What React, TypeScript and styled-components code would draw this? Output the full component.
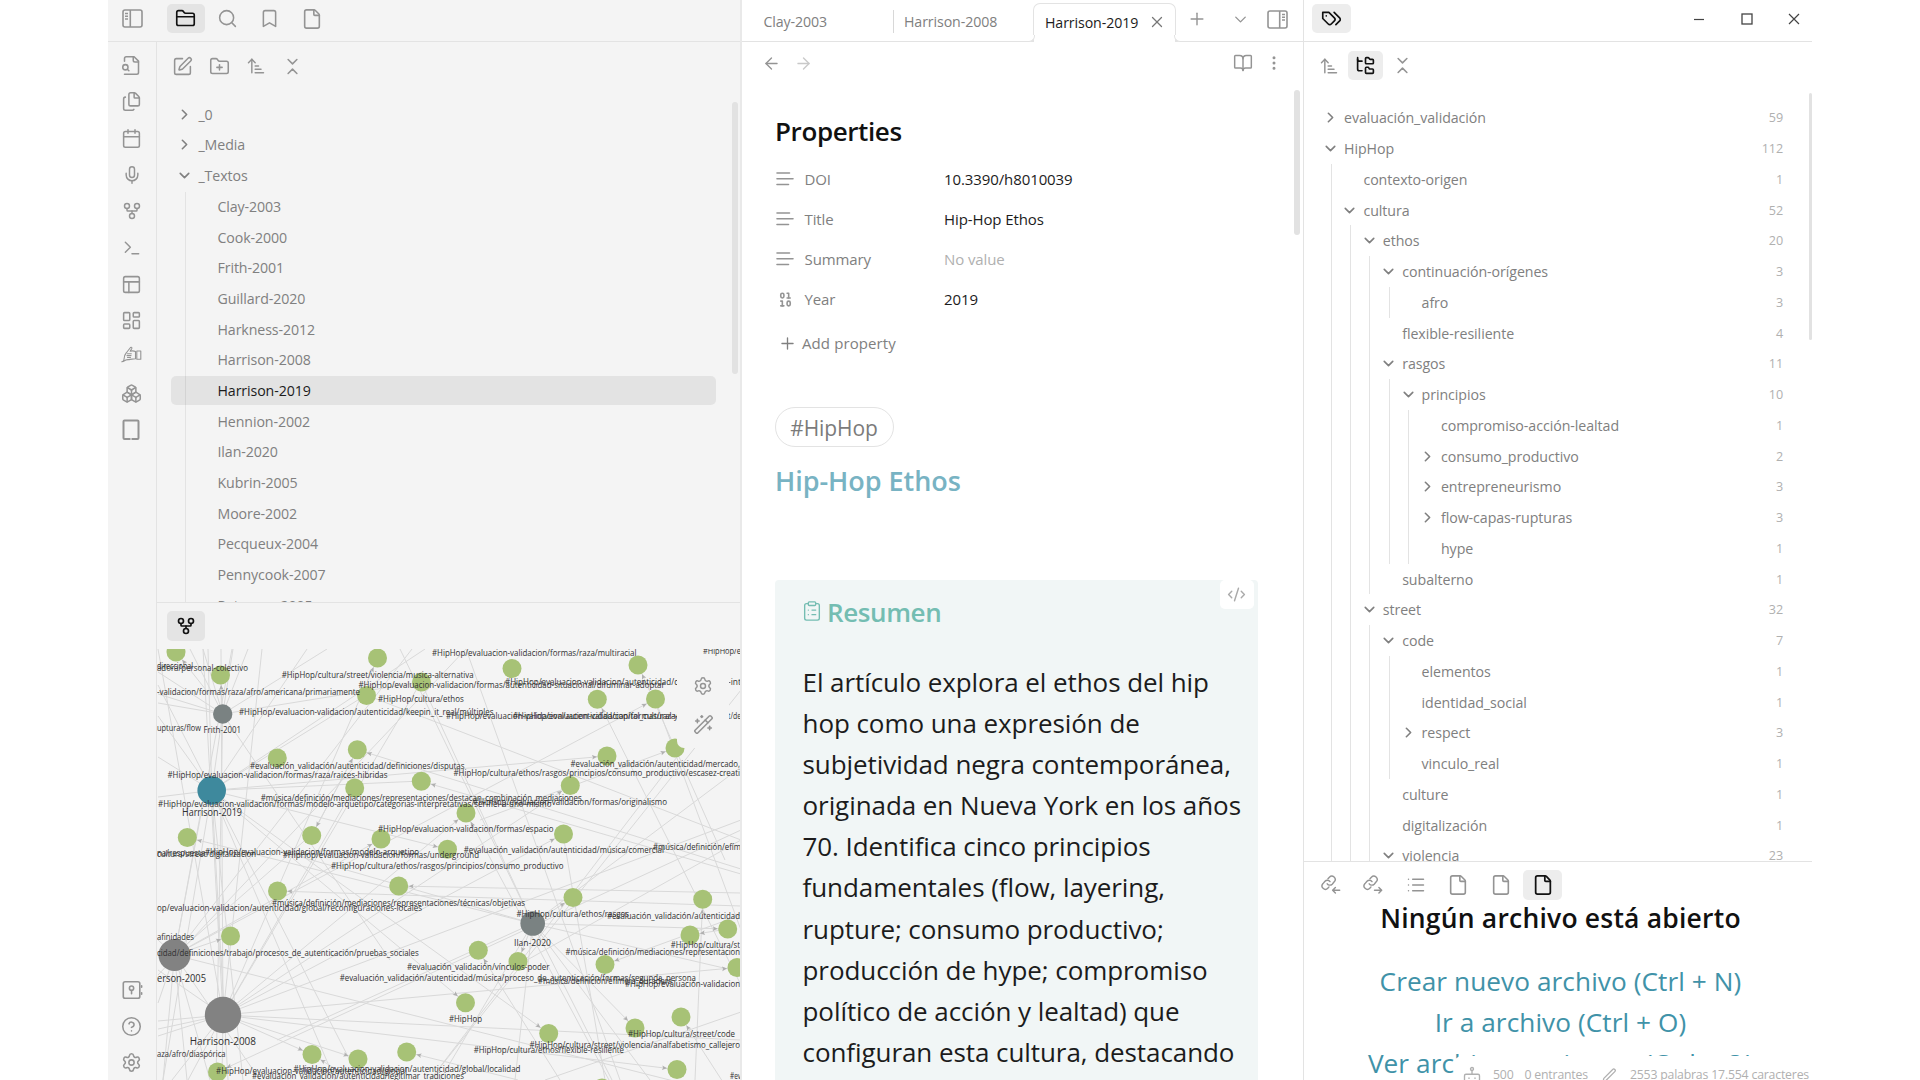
import React from "react";
import styled, { createGlobalStyle, css } from "styled-components";
import {
  ArrowLeft,
  ArrowRight,
  ArrowUpNarrowWide,
  Binary,
  Bookmark,
  BookOpen,
  Boxes,
  Calendar,
  ChevronDown,
  ChevronRight,
  ChevronsDownUp,
  CircleQuestionMark,
  ClipboardList,
  CodeXml,
  EllipsisVertical,
  File,
  Files,
  FolderClosed,
  FolderPlus,
  FolderTree,
  GitFork,
  LayoutDashboard,
  List,
  Mic,
  PanelsTopLeft,
  Plus,
  Search,
  Settings,
  SquarePen,
  Terminal,
  WandSparkles,
  X,
} from "lucide-react";

const c = {
  line: "#e3e3e3",
  side: "#f4f4f4",
  muted: "#808080",
  icon: "#949494",
  faint: "#b0b0b0",
  text: "#1c1c1c",
};

const GlobalStyle = createGlobalStyle`
  * { box-sizing: border-box; }
  body { margin: 0; background: #fff; overflow: hidden; }
`;

const Window = styled.div`
  display: grid;
  grid-template-columns: 634px 562px 508px;
  width: 1704px;
  height: 1080px;
  margin-left: 108px;
  overflow: hidden;
  font-family: "Open Sans", "Noto Sans", sans-serif;
  font-size: 14.2px;
  letter-spacing: -0.1px;
  color: ${c.muted};
  white-space: nowrap;
  svg { flex: none; }
`;

const Left = styled.aside`
  display: flex;
  flex-direction: column;
  height: 1080px;
  background: ${c.side};
  border-right: 2px solid #e9e9e9;
`;

const Center = styled.main`
  display: flex;
  flex-direction: column;
  height: 1080px;
  overflow: hidden;
  border-right: 1px solid ${c.line};
`;

const Right = styled.aside`
  position: relative;
  display: flex;
  flex-direction: column;
  height: 1080px;
  overflow: hidden;
`;

const Header = styled.header<{ $pad: number }>`
  display: flex;
  flex: none;
  height: 42px;
  padding: 4px 0 0 ${(p) => p.$pad}px;
  border-bottom: 1px solid ${c.line};
`;

const IconButton = styled.span<{ $w: number; $h?: number; $on?: boolean; $bg?: string }>`
  display: flex;
  flex: none;
  align-items: center;
  justify-content: center;
  width: ${(p) => p.$w}px;
  height: ${(p) => p.$h ?? 29}px;
  border-radius: 5px;
  color: ${(p) => (p.$on ? "#111" : c.icon)};
  background: ${(p) => (p.$on ? p.$bg ?? "#e4e4e4" : "transparent")};
`;

const Group = styled.div<{ $gap: number; $ml?: number }>`
  display: flex;
  gap: ${(p) => p.$gap}px;
  margin-left: ${(p) => p.$ml ?? 0}px;
`;

const LeftBody = styled.div`
  display: flex;
  flex: 1;
  min-height: 0;
`;

const Ribbon = styled.nav`
  display: flex;
  flex-direction: column;
  justify-content: space-between;
  width: 49px;
  padding-top: 5px;
  border-right: 1px solid ${c.line};
  color: ${c.icon};
`;

const RibbonGroup = styled.div<{ $drop?: number }>`
  display: flex;
  flex-direction: column;
  margin-bottom: ${(p) => -(p.$drop ?? 0)}px;
`;

const RibbonItem = styled.span<{ $lift?: number }>`
  display: flex;
  align-items: center;
  justify-content: center;
  width: 47px;
  height: 36.5px;
  padding-bottom: ${(p) => p.$lift ?? 0}px;
`;

const SidePanes = styled.div`
  display: flex;
  flex: 1;
  flex-direction: column;
  min-width: 0;
`;

const FilesPane = styled.section`
  display: flex;
  flex-direction: column;
  height: 561px;
  border-bottom: 1px solid ${c.line};
  overflow: hidden;
`;

const Toolbar = styled.div`
  display: flex;
  flex: none;
  height: 48px;
  padding-left: 7.5px;
`;

const FileScroll = styled.div`
  display: flex;
  justify-content: space-between;
  flex: 1;
  min-height: 0;
  padding: 9px 2px 0 14px;
  overflow: hidden;
`;

const FileTree = styled.div`
  width: 545px;
`;

const FileRow = styled.div`
  display: flex;
  align-items: center;
  gap: 5.5px;
  height: 30.67px;
  padding-left: 5px;
`;

const FileChildren = styled.div`
  margin: 1.3px 0 0 14px;
  border-left: 1px solid ${c.line};
`;

const FileItem = styled.div<{ $on?: boolean }>`
  display: flex;
  align-items: center;
  height: 28.67px;
  margin: 0 0 2px -15px;
  padding-left: 46.5px;
  border-radius: 5px;
  ${(p) => p.$on && css`color: ${c.text}; background: rgba(0, 0, 0, 0.067);`}
`;

const Thumb = styled.div<{ $h: number; $w?: number; $mt?: number }>`
  flex: none;
  width: ${(p) => p.$w ?? 6}px;
  height: ${(p) => p.$h}px;
  margin-top: ${(p) => p.$mt ?? 0}px;
  border-radius: 3px;
  background: #e2e2e2;
`;

const GraphPane = styled.section`
  position: relative;
  display: flex;
  flex-direction: column;
  flex: 1;
  padding-top: 8px;
`;

const GraphSvg = styled.svg`
  display: block;
  margin-top: 8px;
`;

const GraphControls = styled.div`
  position: absolute;
  left: 520px;
  top: 56px;
  display: flex;
  flex-direction: column;
  align-items: center;
  gap: 18px;
  width: 52px;
  height: 89px;
  padding-top: 17px;
  border-radius: 7px;
  background: ${c.side};
  color: ${c.icon};
`;

const TabBar = styled.header`
  display: flex;
  flex: none;
  height: 42px;
  border-bottom: 1px solid ${c.line};
  font-size: 14.2px;
`;

const Tab = styled.div<{ $w: number; $pad: number; $sep?: boolean }>`
  display: flex;
  align-items: center;
  width: ${(p) => p.$w}px;
  height: 23px;
  margin-top: 10px;
  padding-left: ${(p) => p.$pad}px;
  border-right: ${(p) => (p.$sep ? "1px solid #d8d8d8" : "0")};
`;

const ActiveTab = styled.div`
  position: relative;
  display: flex;
  align-items: center;
  justify-content: space-between;
  width: 143px;
  height: 39px;
  margin-top: 3px;
  padding: 0 9px 2px 11px;
  border: 1px solid ${c.line};
  border-bottom: 0;
  border-radius: 7px 7px 0 0;
  background: #fff;
  color: ${c.text};
  svg { color: #777; }
  &::before, &::after {
    content: "";
    position: absolute;
    bottom: 0;
    width: 6px;
    height: 6px;
    border-bottom: 1px solid ${c.line};
    background: #fff;
  }
  &::before { left: -6px; border-right: 1px solid ${c.line}; border-bottom-right-radius: 6px; }
  &::after { right: -6px; border-left: 1px solid ${c.line}; border-bottom-left-radius: 6px; }
`;

const TabTools = styled.div`
  display: flex;
  flex: 1;
  align-items: center;
  height: 30px;
  margin: 4px 15px 0 11px;
  color: ${c.icon};
`;

const NavBar = styled.div`
  display: flex;
  flex: none;
  align-items: center;
  height: 42px;
  padding: 0 20.5px 0 20px;
  color: ${c.icon};
`;

const Push = styled.span`
  flex: 1;
`;

const Faded = styled.span<{ $ml: number }>`
  display: flex;
  margin-left: ${(p) => p.$ml}px;
  opacity: 0.5;
`;

const Spaced = styled.span<{ $ml: number }>`
  display: flex;
  margin-left: ${(p) => p.$ml}px;
`;

const NoteScroll = styled.div`
  display: flex;
  justify-content: space-between;
  flex: 1;
  min-height: 0;
  padding: 6px 3px 0 33px;
  overflow: hidden;
`;

const Note = styled.article`
  width: 483px;
`;

const PropsTitle = styled.h2`
  margin: 23px 0 0;
  font-size: 26px;
  line-height: 36px;
  font-weight: 600;
  letter-spacing: -0.4px;
  color: #111;
`;

const PropRow = styled.div`
  display: grid;
  grid-template-columns: 29.5px 139.5px 1fr;
  align-items: center;
  height: 40px;
  font-size: 15px;
  svg { margin-left: 1px; color: ${c.icon}; }
`;

const PropList = styled.div`
  margin-top: 10px;
`;

const PropValue = styled.span<{ $empty?: boolean }>`
  color: ${(p) => (p.$empty ? c.faint : c.text)};
`;

const AddProperty = styled.div`
  display: flex;
  align-items: center;
  gap: 5.5px;
  height: 48px;
  padding-left: 2.5px;
  font-size: 15px;
  letter-spacing: 0.1px;
`;

const TagPill = styled.span`
  display: flex;
  align-items: center;
  justify-content: center;
  width: 119px;
  height: 40px;
  margin-top: 40px;
  padding-top: 2px;
  padding-right: 1px;
  border: 1px solid ${c.line};
  border-radius: 20px;
  font-size: 21px;
  color: #7b7b7b;
`;

const NoteTitle = styled.h1`
  margin: 15px 0 0;
  font-size: 27px;
  line-height: 38px;
  font-weight: 600;
  letter-spacing: -0.05px;
  color: #78b3c3;
`;

const Callout = styled.section`
  height: 520px;
  margin-top: 80px;
  padding-left: 27.5px;
  border-radius: 4px 4px 0 0;
  background: #f1f6f6;
`;

const CalloutHead = styled.div`
  display: flex;
  justify-content: space-between;
  padding-right: 4px;
  height: 85px;
`;

const CalloutTitle = styled.h3`
  display: flex;
  align-items: flex-start;
  gap: 4.5px;
  margin: 13px 0 0;
  font-size: 26px;
  line-height: 38px;
  font-weight: 600;
  letter-spacing: -0.4px;
  color: #74bdb2;
  svg { margin: 7px 0 0 -2px; }
`;

const CodeButton = styled.span`
  display: flex;
  align-items: center;
  justify-content: center;
  width: 34.5px;
  height: 29px;
  border-radius: 5px;
  background: #fff;
  color: #aaa;
`;

const Body = styled.p`
  margin: -3px 0 0;
  font-size: 26px;
  line-height: 41.1px;
  letter-spacing: -0.07px;
  color: ${c.text};
`;

const WindowControls = styled.div`
  display: flex;
  flex: 1;
  justify-content: flex-end;
  align-items: center;
  gap: 35.5px;
  height: 29px;
  padding-right: 12px;
  color: #444;
`;

const TagToolbar = styled.div`
  display: flex;
  flex: none;
  gap: 0.5px;
  padding: 9px 0 0 7px;
  height: 51px;
`;

const TagScroll = styled.div`
  display: flex;
  justify-content: space-between;
  flex: none;
  height: 768px;
  padding-left: 18px;
  overflow: hidden;
`;

const TagTree = styled.div`
  width: 461px;
  padding-top: 9.4px;
`;

const TagRow = styled.div`
  display: flex;
  align-items: center;
  height: 30.76px;
  b { flex: 1; font-weight: 400; letter-spacing: -0.06px; }
  i { font-style: normal; font-size: 12.6px; color: ${c.faint}; }
`;

const TagChevron = styled.span`
  display: flex;
  align-items: center;
  justify-content: center;
  width: 17px;
  margin-right: 5px;
`;

const TagChildren = styled.div`
  margin-left: 8.5px;
  padding-left: 9.9px;
  border-left: 1px solid ${c.line};
`;

const LowerPane = styled.section`
  flex: 1;
  border-top: 1px solid ${c.line};
  padding: 8px 0 0 7.5px;
`;

const LowerTabs = styled.div`
  display: flex;
  gap: 3.4px;
`;

const EmptyState = styled.div`
  width: 498px;
  text-align: center;
`;

const EmptyTitle = styled.h2`
  margin: 0;
  font-size: 26.5px;
  line-height: 36px;
  font-weight: 600;
  color: #111;
  letter-spacing: 0.2px;
`;

const EmptyLink = styled.a`
  display: block;
  font-size: 26.2px;
  line-height: 41px;
  letter-spacing: 0.08px;
  color: #4092a8;
`;

const EmptyLinks = styled.div`
  padding-top: 25px;
`;

const StatusBar = styled.footer`
  position: absolute;
  right: 0;
  bottom: 0;
  display: flex;
  align-items: center;
  width: 358px;
  height: 24px;
  padding: 14px 3px 0 9px;
  border-radius: 8px 0 0 0;
  background: #fff;
  color: ${c.faint};
  font-size: 12.3px;
  letter-spacing: -0.2px;
  line-height: 16px;
`;

const sw = 1.75;

const stroke24 = {
  viewBox: "0 0 24 24",
  fill: "none",
  stroke: "currentColor",
  strokeLinecap: "round" as const,
  strokeLinejoin: "round" as const,
};

const SidebarGlyph = ({ right }: { right?: boolean }) => (
  <svg width="21" height="19" viewBox="0 0 21 19" fill="none" stroke="currentColor" strokeWidth="1.6">
    <g transform={right ? "translate(21 0) scale(-1 1)" : undefined}>
      <rect x="1" y="1" width="19" height="17" rx="2" />
      <path d="M8.300 1v17M3 4.500h3M3 7.200h3M3 10h3" />
    </g>
  </svg>
);

const FileSearchGlyph = () => (
  <svg {...stroke24} width="21" height="21" strokeWidth={sw}>
    <path d="M4 22h14a2 2 0 0 0 2-2V7l-5-5H6a2 2 0 0 0-2 2v3" />
    <path d="M14 2v4a2 2 0 0 0 2 2h4" />
    <circle cx="5" cy="14" r="3" />
    <path d="m9 18-1.500-1.500" />
  </svg>
);

const VaultGlyph = () => (
  <svg {...stroke24} width="22" height="22" strokeWidth={sw}>
    <rect x="2.500" y="3" width="18" height="18" rx="2" />
    <circle cx="11.500" cy="10" r="2.300" />
    <path d="M11.500 12.500V16M22.500 7.500v1.500M22.500 15v1.500" />
  </svg>
);

const TagsGlyph = () => (
  <svg {...stroke24} width="21" height="21" strokeWidth={1.9}>
    <path d="M9 5H2v7l6.290 6.290c.94.94 2.480.94 3.420 0l3.580-3.580c.94-.94.94-2.480 0-3.420L9 5Z" />
    <path d="M6 9.010V9" />
    <path d="m15 5 6.300 6.300a2.400 2.400 0 0 1 0 3.400L17 19" />
  </svg>
);

const BotGlyph = () => (
  <svg {...stroke24} width="18" height="18" strokeWidth={1.8}>
    <rect x="2" y="11" width="20" height="11" rx="2" />
    <circle cx="12" cy="4" r="2" />
    <path d="M12 6v5M8 16v.5M16 16v.5" />
  </svg>
);

const PenGlyph = () => (
  <svg {...stroke24} width="17" height="17" strokeWidth={1.8}>
    <path d="M12 21h9" />
    <path d="M16.500 3.500a2.120 2.120 0 0 1 3 3L7 19l-4 1 1-4Z" />
  </svg>
);

const HandGlyph = () => (
  <svg width="21" height="18" viewBox="0 0 21 18" fill="none" stroke="currentColor" strokeWidth="1.1" strokeLinejoin="round" strokeLinecap="round">
    <path d="M.800 16.700c1.400-.2 2-1 2.200-2.200.3-2.800.4-4.800 2.200-6.500l4.300-5.500c.9-.7 1.700 0 1.300 1L9.200 6.200c2.200-.6 3.800-.4 5.300.4v7.200l-5.500.6c-1.600.4-3 0-4.200.6-1.400.8-2.400 1.700-4 1.700z" />
    <path d="M6.500 8.700h3.800M6 10.600h4M6.500 12.500h3M15.800 6h4v8.200h-4z" />
  </svg>
);

const TabletGlyph = () => (
  <svg width="19" height="22" viewBox="0 0 19 22" fill="none" stroke="currentColor" strokeWidth="2">
    <rect x="1.500" y="1.500" width="15" height="18.500" rx="1" />
    <path d="M8 20h2" stroke="#f4f4f4" strokeWidth="1" />
  </svg>
);

const LinkGlyph = ({ out }: { out?: boolean }) => (
  <svg width="20" height="20" viewBox="0 0 20 20" fill="none" stroke="currentColor" strokeWidth="1.400" strokeLinecap="round" strokeLinejoin="round">
    <path d="M6.200 8.800a3.300 3.300 0 0 0 5 .4l2-2.400a3.300 3.300 0 0 0-4.800-4.600L7 3.700" />
    <path d="M9 6.600a3.300 3.300 0 0 0-5-.4L2 8.600a3.300 3.300 0 0 0 4.800 4.600l1.200-1.300" />
    <path d={out ? "M11.500 15.300h7M15.900 12.500l2.800 2.800-2.800 2.800" : "M18.700 15.300h-7M14.400 12.500l-2.800 2.800 2.800 2.800"} />
  </svg>
);

const TextGlyph = () => (
  <svg width="18" height="14" viewBox="0 0 18 14" fill="none" stroke="currentColor" strokeWidth="1.600" strokeLinecap="round">
    <path d="M1 1h12.500M1 6.800h16M1 12.500h11.500" />
  </svg>
);

const ribbon: { icon: React.ReactNode; lift?: number }[] = [
  { icon: <FileSearchGlyph /> },
  { icon: <Files size={21} strokeWidth={sw} /> },
  { icon: <Calendar size={21} strokeWidth={sw} /> },
  { icon: <Mic size={20} strokeWidth={sw} /> },
  { icon: <GitFork size={20} strokeWidth={sw} /> },
  { icon: <Terminal size={20} strokeWidth={sw} /> },
  { icon: <PanelsTopLeft size={21} strokeWidth={sw} /> },
  { icon: <LayoutDashboard size={21} strokeWidth={sw} /> },
  { icon: <HandGlyph />, lift: 7 },
  { icon: <Boxes size={21} strokeWidth={sw} /> },
  { icon: <TabletGlyph /> },
];

const files = [
  "Clay-2003", "Cook-2000", "Frith-2001", "Guillard-2020", "Harkness-2012", "Harrison-2008", "Harrison-2019",
  "Hennion-2002", "Ilan-2020", "Kubrin-2005", "Moore-2002", "Pecqueux-2004", "Pennycook-2007", "Peterson-2005",
];

type TagNode = { name: string; n: number; open?: TagNode[]; closed?: boolean };

const tags: TagNode[] = [
  { name: "evaluación_validación", n: 59, closed: true },
  { name: "HipHop", n: 112, open: [
    { name: "contexto-origen", n: 1 },
    { name: "cultura", n: 52, open: [
      { name: "ethos", n: 20, open: [
        { name: "continuación-orígenes", n: 3, open: [{ name: "afro", n: 3 }] },
        { name: "flexible-resiliente", n: 4 },
        { name: "rasgos", n: 11, open: [
          { name: "principios", n: 10, open: [
            { name: "compromiso-acción-lealtad", n: 1 },
            { name: "consumo_productivo", n: 2, closed: true },
            { name: "entrepreneurismo", n: 3, closed: true },
            { name: "flow-capas-rupturas", n: 3, closed: true },
            { name: "hype", n: 1 },
          ] },
        ] },
        { name: "subalterno", n: 1 },
      ] },
      { name: "street", n: 32, open: [
        { name: "code", n: 7, open: [
          { name: "elementos", n: 1 },
          { name: "identidad_social", n: 1 },
          { name: "respect", n: 3, closed: true },
          { name: "vinculo_real", n: 1 },
        ] },
        { name: "culture", n: 1 },
        { name: "digitalización", n: 1 },
        { name: "violencia", n: 23, open: [] },
      ] },
    ] },
  ] },
];

const TagBranch = ({ nodes }: { nodes: TagNode[] }) => (
  <>
    {nodes.map((t) => (
      <React.Fragment key={t.name}>
        <TagRow>
          <TagChevron>
            {t.closed && <ChevronRight size={17} strokeWidth={2.3} />}
            {t.open && <ChevronDown size={17} strokeWidth={2.3} />}
          </TagChevron>
          <b>{t.name}</b>
          <i>{t.n}</i>
        </TagRow>
        {t.open && <TagChildren><TagBranch nodes={t.open} /></TagChildren>}
      </React.Fragment>
    ))}
  </>
);

type Pt = [number, number];

const frith: Pt = [222.7, 714];
const h2019: Pt = [211.7, 790.5];
const ilan: Pt = [532.7, 923.5];
const h2008: Pt = [223, 1015];
const peterson: Pt = [174.5, 955];

const green: Pt[] = [
  [176, 652], [220.5, 675], [377.5, 658], [366.5, 695.5], [421.5, 682], [277.3, 758], [357.3, 749.7], [421.3, 781.3],
  [354.7, 788], [187.3, 837.5], [311.7, 835.5], [381, 839], [512, 668.5], [638, 665], [597.3, 699.3], [655.5, 699],
  [607, 756], [675, 748], [570.3, 785.5], [466, 813], [563.5, 834], [447.5, 849.3], [277.5, 891], [398.7, 886],
  [230.5, 936], [312, 1054.5], [358, 1059], [406.7, 1052], [217.5, 1072], [573, 897.5], [702.7, 899.3], [690, 935],
  [727.7, 929], [478.3, 950.3], [518, 961.5], [605, 964.5], [737, 967.5], [465.5, 1002.7], [548.7, 1033.5],
  [635, 1028], [681, 1017], [677, 1069.5], [602, 1088],
];

const hubs: { at: Pt; r: number; fill: string }[] = [
  { at: frith, r: 9.7, fill: "#7a8282" },
  { at: h2019, r: 14.3, fill: "#3e899d" },
  { at: ilan, r: 12.3, fill: "#7a8282" },
  { at: h2008, r: 18.2, fill: "#828282" },
  { at: peterson, r: 16, fill: "#828282" },
];

const plain: [Pt, Pt[]][] = [
  [frith, [[158, 672], [158, 703], [158, 694], [190, 649], [203, 649], [233, 649], [248, 649], [327, 649], [421, 682], h2019, [216, 1080], [390, 960]]],
  [h2019, [[158, 716], [158, 757], [158, 797], [307, 649], [366, 695], [425, 649], [421, 781], [228, 1080], [243, 1080], [335, 1080], [163, 1080], [208, 649]]],
  [h2008, [[158, 649], [203, 649], [262, 649], [354, 788], [421, 682], [741, 820], [158, 1021], [158, 1029], [158, 1036], [172, 1080], [188, 1080], [221, 649], [222, 1080], [741, 1040], [158, 970]]],
  [peterson, [[203, 800], [232, 649], [311, 835], [412, 649], [163, 1080], [187, 1080], [158, 1003], [210, 1080], [260, 1080], [158, 940], [741, 1098]]],
  [ilan, [[277, 850], [421, 682], [400, 649], [741, 767], [741, 972], [650, 1080], [612, 1080], [515, 1080], [440, 1080], [277, 1040]]],
  [[466, 649], [[158, 975], [620, 1080]]],
  [[741, 840], [[520, 964], [366, 695]]],
  [[741, 1012], [[545, 1080]]],
  [[563, 834], [[605, 1080]]],
  [[158, 685], [[360, 1080]]],
  [[430, 1080], [[690, 740], [741, 690]]],
  [[655, 699], [[741, 930]]],
];

const arrows: [Pt, Pt][] = [
  [frith, [220.5, 675]], [[206, 690], [176, 652]], [h2008, [377.5, 658]], [h2019, [607, 756]], [h2019, [447.5, 849.3]],
  [h2019, [548.7, 1033.5]], [h2019, [465.5, 1002.7]], [h2008, [466, 813]], [h2008, [570.3, 785.5]], [[480, 820], [675, 748]],
  [peterson, [655.5, 699]], [peterson, [230.5, 936]], [[311.7, 835.5], [357.3, 749.7]], [[357.3, 749.7], [311.7, 835.5]],
  [[741, 893], [398.7, 886]], [[741, 906], [277.5, 891]], [[741, 869], [357.3, 749.7]], [[741, 874], [421.3, 781.3]],
  [ilan, [187.3, 837.5]], [ilan, [573, 897.5]], [ilan, [518, 961.5]], [ilan, [727.7, 929]], [ilan, [635, 1028]],
  [[741, 915], [605, 964.5]], [[741, 985], [597.3, 699.3]], [[725, 860], [638, 665]], [[695, 1080], [702.7, 899.3]],
  [[741, 1110], [681, 1017]], [h2008, [737, 967.5]], [h2008, [312, 1054.5]], [h2008, [358, 1059]], [h2008, [677, 1069.5]],
  [[609, 1080], [466, 813]], [[727.7, 929], [690, 935]], [[518, 1080], [406.7, 1052]], [[370, 1090], [312, 1054.5]],
  [[741, 830], [217.5, 1072]], [[560, 1080], [478.3, 950.3]], [peterson, [381, 839]], [h2008, [563.5, 834]],
];

// x start, vertical centre, x end, text, font size
const labels: [number, number, number, string, number?][] = [
  [157, 666, 193, "direccional"], [157, 668, 248, "adora/personal-colectivo"],
  [157, 692, 360, "-validacion/formas/raza/afro/americana/primariamente"],
  [239, 711.7, 493.5, "#HipHop/evaluacion-validacion/autenticidad/keepin_it_real/múltiples"],
  [157, 728, 201, "upturas/flow"], [203.5, 730.5, 241, "Frith-2001", 9.3],
  [281.7, 675, 473.7, "#HipHop/cultura/street/violencia/musica-alternativa"],
  [358.5, 685, 664.7, "#HipHop/evaluacion-validacion/formas/autenticidad-situacional/difuminar-adoptar"],
  [378, 698.7, 463.7, "#HipHop/cultura/ethos"],
  [432, 653.5, 636.5, "#HipHop/evaluacion-validacion/formas/raza/multiracial"],
  [703, 651, 741, "#HipHop/e"], [505, 682, 678, "#HipHop/evaluacion-validacion/autenticidad/c"],
  [728, 682, 741, "-int"], [446, 716, 678, "#HipHop/evaluación-validacion/autenticidad/capital_cultural-y"],
  [513, 716, 678, "#HipHop/evaluacion-validacion/formas/raza-"], [728, 716, 741, "t/de"],
  [250, 766.5, 464.5, "#evaluación_validación/autenticidad/definiciones/disputas"],
  [167.5, 775, 387.5, "#HipHop/evaluacion-validacion/formas/raza/raices-hibridas"],
  [570.5, 764.5, 740, "#evaluación_validación/autenticidad/mercado,"],
  [453.5, 773, 740, "#HipHop/cultura/ethos/rasgos/principios/consumo_productivo/escasez-creati"],
  [260.7, 798, 581.7, "#música/definición/mediaciones/representaciones/destacan_combinación_mediaciones"],
  [158, 804.5, 551.5, "#HipHop/evaluacion-validacion/formas/modelo-arquetipo/categorias-interpretativas/ser-fiel-a-uno-mismo"],
  [182, 813, 242, "Harrison-2019", 10.2],
  [473, 802.5, 667, "#HipHop/evaluacion-validacion/formas/originalismo"],
  [378, 829.5, 553.5, "#HipHop/evaluacion-validacion/formas/espacio"],
  [157, 854, 256, "cultura/street/digitalizacion"], [157, 853, 205, "na/respuesta"],
  [205, 852, 419, "#HipHop/evaluacion-validacion/formas/modelo-arquetipo"],
  [282.7, 855.5, 479, "#HipHop/evaluacion-validacion/formas/underground"],
  [463.7, 850.5, 664, "#evaluación_validación/autenticidad/música/comercial"],
  [653, 847, 741, "#música/definición/efím"],
  [331, 866, 563.5, "#HipHop/cultura/ethos/rasgos/principios/consumo_productivo"],
  [272, 902.7, 525, "#música/definición/mediaciones/representaciones/técnicas/objetivas"],
  [157, 908, 422, "op/evaluacion-validacion/autenticidad/global/reconfiguraciones-locales"],
  [157, 937, 194, "afinidades"],
  [157, 953, 418.7, "cidad/definiciones/trabajo/procesos_de_autenticación/pruebas_sociales"],
  [157, 979, 206, "erson-2005", 10.8], [189.7, 1042, 256, "Harrison-2008", 11.2],
  [407, 967, 549.5, "#evaluación_validación/vínculos-poder"],
  [339.7, 978, 696, "#evaluación_validación/autenticidad/música/proceso_de_autenticación/formas/segunda_persona"],
  [157, 1054.5, 225.5, "aza/afro/diaspórica"],
  [216, 1071, 407, "#HipHop/evaluacion-validacion/autenticidad/global"],
  [293.5, 1069, 520.5, "#HipHop/evaluacion-validacion/autenticidad/global/localidad"],
  [252, 1076, 464, "#evaluación_validación/autenticidad/legitimar_tradiciones"],
  [516.5, 914, 629, "#HipHop/cultura/ethos/rasgos"], [607, 916, 740, "#evaluación_validación/autenticidad"],
  [514, 943, 551, "Ilan-2020", 9.3], [670.7, 945.5, 740, "#HipHop/cultura/st"],
  [565.5, 952.5, 740, "#música/definición/mediaciones/representacion"],
  [538, 981, 672, "#música/definición/efímera_duradera"], [625, 984, 740, "#HipHop/evaluación-validacion"],
  [449, 1019.5, 482, "#HipHop"], [628, 1034, 735, "#HipHop/cultura/street/code"],
  [529.5, 1045, 740, "#HipHop/cultura/street/violencia/analfabetismo_callejero"],
  [473.7, 1050, 624, "#HipHop/cultura/ethos/flexible-resiliente"], [730, 1076, 741, "#ev"],
];

const Graph = () => (
  <GraphSvg width="583" height="431" viewBox="157 649 583 431">
    <g stroke="#d9d9d9" strokeWidth="1">
      {plain.map(([a, ends], i) =>
        ends.map((b, j) => <line key={`${i}-${j}`} x1={a[0]} y1={a[1]} x2={b[0]} y2={b[1]} />)
      )}
      {arrows.map(([a, b], i) => <line key={i} x1={a[0]} y1={a[1]} x2={b[0]} y2={b[1]} />)}
    </g>
    {arrows.map(([a, b], i) => {
      const angle = Math.atan2(b[1] - a[1], b[0] - a[0]);
      const x = b[0] - Math.cos(angle) * 10;
      const y = b[1] - Math.sin(angle) * 10;
      return (
        <path key={i} d="M0 0L-5 -2.300L-4 0L-5 2.300z" fill="#b0b0b0" transform={`translate(${x} ${y}) rotate(${(angle * 180) / Math.PI})`} />
      );
    })}
    {green.map(([x, y], i) => <circle key={i} cx={x} cy={y} r="9.500" fill="#a7c276" />)}
    {hubs.map((h, i) => <circle key={i} cx={h.at[0]} cy={h.at[1]} r={h.r} fill={h.fill} />)}
    <g fill="#303030">
      {labels.map(([x, y, end, text, size], i) => (
        <text key={i} x={x} y={y + 2.8} fontSize={size ?? 9} textLength={end - x} lengthAdjust="spacingAndGlyphs" letterSpacing="0">
          {text}
        </text>
      ))}
    </g>
  </GraphSvg>
);

const bodyLines = [
  "El artículo explora el ethos del hip",
  "hop como una expresión de",
  "subjetividad negra contemporánea,",
  "originada en Nueva York en los años",
  "70. Identifica cinco principios",
  "fundamentales (flow, layering,",
  "rupture; consumo productivo;",
  "producción de hype; compromiso",
  "político de acción y lealtad) que",
  "configuran esta cultura, destacando",
];

export default function App() {
  return (
    <>
      <GlobalStyle />
      <Window>
        <Left>
          <Header $pad={0}>
            <IconButton $w={48}><SidebarGlyph /></IconButton>
            <Group $gap={4.2} $ml={10.5}>
              <IconButton $w={38} $on><FolderClosed size={21} strokeWidth={1.9} /></IconButton>
              <IconButton $w={38}><Search size={21} strokeWidth={sw} /></IconButton>
              <IconButton $w={38}><Bookmark size={21} strokeWidth={sw} /></IconButton>
              <IconButton $w={38}><File size={22} strokeWidth={sw} /></IconButton>
            </Group>
          </Header>
          <LeftBody>
            <Ribbon>
              <RibbonGroup>
                {ribbon.map((r, i) => <RibbonItem key={i} $lift={r.lift}>{r.icon}</RibbonItem>)}
              </RibbonGroup>
              <RibbonGroup $drop={1}>
                <RibbonItem><VaultGlyph /></RibbonItem>
                <RibbonItem><CircleQuestionMark size={21} strokeWidth={sw} /></RibbonItem>
                <RibbonItem><Settings size={21} strokeWidth={sw} /></RibbonItem>
              </RibbonGroup>
            </Ribbon>
            <SidePanes>
              <FilesPane>
                <Toolbar>
                  <IconButton $w={36.6} $h={48}><SquarePen size={21} strokeWidth={sw} /></IconButton>
                  <IconButton $w={36.6} $h={48}><FolderPlus size={21} strokeWidth={sw} /></IconButton>
                  <IconButton $w={36.6} $h={48}><ArrowUpNarrowWide size={20} strokeWidth={sw} /></IconButton>
                  <IconButton $w={36.6} $h={48}><ChevronsDownUp size={21} strokeWidth={sw} /></IconButton>
                </Toolbar>
                <FileScroll>
                  <FileTree>
                    <FileRow><ChevronRight size={17} strokeWidth={2.3} />_0</FileRow>
                    <FileRow><ChevronRight size={17} strokeWidth={2.3} />_Media</FileRow>
                    <FileRow><ChevronDown size={17} strokeWidth={2.3} />_Textos</FileRow>
                    <FileChildren>
                      {files.map((f) => <FileItem key={f} $on={f === "Harrison-2019"}>{f}</FileItem>)}
                    </FileChildren>
                  </FileTree>
                  <Thumb $h={272} $mt={3} />
                </FileScroll>
              </FilesPane>
              <GraphPane>
                <Group $gap={0} $ml={9.5}>
                  <IconButton $w={38} $h={30} $on><GitFork size={20} strokeWidth={2} /></IconButton>
                </Group>
                <Graph />
                <GraphControls>
                  <Settings size={20} strokeWidth={sw} />
                  <WandSparkles size={21} strokeWidth={sw} />
                </GraphControls>
              </GraphPane>
            </SidePanes>
          </LeftBody>
        </Left>

        <Center>
          <TabBar>
            <Tab $w={152} $pad={21.5} $sep>Clay-2003</Tab>
            <Tab $w={139} $pad={10}>Harrison-2008</Tab>
            <ActiveTab>Harrison-2019<X size={18} strokeWidth={1.7} /></ActiveTab>
            <TabTools>
              <Plus size={20} strokeWidth={1.7} />
              <Spaced $ml={24}><ChevronDown size={19} strokeWidth={1.7} /></Spaced>
              <Push />
              <SidebarGlyph right />
            </TabTools>
          </TabBar>
          <NavBar>
            <ArrowLeft size={19} strokeWidth={1.7} />
            <Faded $ml={13}><ArrowRight size={19} strokeWidth={1.7} /></Faded>
            <Push />
            <BookOpen size={20} strokeWidth={sw} />
            <Spaced $ml={12}><EllipsisVertical size={18} strokeWidth={2} /></Spaced>
          </NavBar>
          <NoteScroll>
            <Note>
              <PropsTitle>Properties</PropsTitle>
              <PropList>
                <PropRow><TextGlyph /><span>DOI</span><PropValue>10.3390/h8010039</PropValue></PropRow>
                <PropRow><TextGlyph /><span>Title</span><PropValue>Hip-Hop Ethos</PropValue></PropRow>
                <PropRow><TextGlyph /><span>Summary</span><PropValue $empty>No value</PropValue></PropRow>
                <PropRow><Binary size={19} strokeWidth={2} /><span>Year</span><PropValue>2019</PropValue></PropRow>
              </PropList>
              <AddProperty><Plus size={19} strokeWidth={1.7} />Add property</AddProperty>
              <TagPill>#HipHop</TagPill>
              <NoteTitle>Hip-Hop Ethos</NoteTitle>
              <Callout>
                <CalloutHead>
                  <CalloutTitle><ClipboardList size={22} strokeWidth={1.5} />Resumen</CalloutTitle>
                  <CodeButton><CodeXml size={19} strokeWidth={1.8} /></CodeButton>
                </CalloutHead>
                <Body>
                  {bodyLines.map((l) => <React.Fragment key={l}>{l}<br /></React.Fragment>)}
                </Body>
              </Callout>
            </Note>
            <Thumb $h={145} />
          </NoteScroll>
        </Center>

        <Right>
          <Header $pad={8}>
            <IconButton $w={39} $on $bg="#ededed"><TagsGlyph /></IconButton>
            <WindowControls>
              <svg width="12" height="12" viewBox="0 0 12 12" stroke="currentColor" strokeWidth="1.200"><path d="M1 6.500h10" /></svg>
              <svg width="12" height="12" viewBox="0 0 12 12" fill="none" stroke="currentColor" strokeWidth="1.300"><rect x="1" y="1" width="10" height="10" /></svg>
              <svg width="12" height="12" viewBox="0 0 12 12" stroke="currentColor" strokeWidth="1.200"><path d="M1 1l10 10M11 1L1 11" /></svg>
            </WindowControls>
          </Header>
          <TagToolbar>
            <IconButton $w={36.5}><ArrowUpNarrowWide size={20} strokeWidth={sw} /></IconButton>
            <IconButton $w={35} $on $bg="#ededed"><FolderTree size={21} strokeWidth={1.9} /></IconButton>
            <IconButton $w={37}><ChevronsDownUp size={21} strokeWidth={sw} /></IconButton>
          </TagToolbar>
          <TagScroll>
            <TagTree><TagBranch nodes={tags} /></TagTree>
            <Thumb $h={247} $w={3} />
          </TagScroll>
          <LowerPane>
            <LowerTabs>
              <IconButton $w={39} $h={30}><LinkGlyph /></IconButton>
              <IconButton $w={39} $h={30}><LinkGlyph out /></IconButton>
              <IconButton $w={39} $h={30}><List size={20} strokeWidth={sw} /></IconButton>
              <IconButton $w={39} $h={30}><File size={22} strokeWidth={sw} /></IconButton>
              <IconButton $w={39} $h={30}><File size={22} strokeWidth={sw} /></IconButton>
              <IconButton $w={39} $h={30} $on $bg="#ededed"><File size={22} strokeWidth={1.9} /></IconButton>
            </LowerTabs>
            <EmptyState>
              <EmptyTitle>Ningún archivo está abierto</EmptyTitle>
              <EmptyLinks>
                <EmptyLink>Crear nuevo archivo (Ctrl + N)</EmptyLink>
                <EmptyLink>Ir a archivo (Ctrl + O)</EmptyLink>
                <EmptyLink>Ver archivos recientes (Ctrl + O)</EmptyLink>
              </EmptyLinks>
            </EmptyState>
          </LowerPane>
          <StatusBar>
            <BotGlyph />
            <Spaced $ml={12}>500</Spaced>
            <Spaced $ml={11}>0 entrantes</Spaced>
            <Spaced $ml={13}><PenGlyph /></Spaced>
            <Spaced $ml={12}>2553 palabras</Spaced>
            <Push />
            <span>17.554 caracteres</span>
          </StatusBar>
        </Right>
      </Window>
    </>
  );
}
